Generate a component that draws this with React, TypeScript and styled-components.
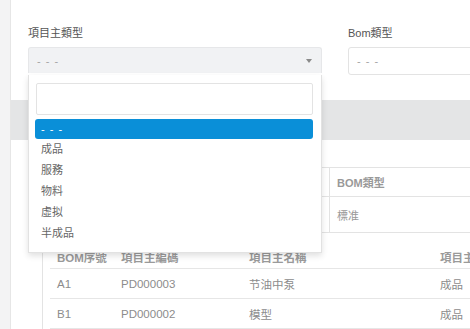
import styled, { createGlobalStyle } from 'styled-components';

const GlobalStyle = createGlobalStyle`
  html, body {
    margin: 0;
    padding: 0;
    background: #fff;
    font-family: "Liberation Sans", "Noto Sans CJK TC", sans-serif;
    font-size: 11px;
    color: #666;
    overflow: hidden;
  }
`;

const Page = styled.div`
  display: flex;
  width: 470px;
  height: 329px;
  overflow: hidden;
`;

const SideStrip = styled.div`
  width: 10px;
  flex: none;
  background: #f3f3f4;
  border-right: 1px solid #e6e6e6;
`;

const Main = styled.div`
  flex: 1;
  min-width: 0;
  display: flex;
  flex-direction: column;
  padding-top: 26px;
`;

const FormRow = styled.div`
  display: flex;
  gap: 26px;
  padding-left: 17px;
`;

const Field = styled.div<{ $width: number }>`
  position: relative;
  width: ${(p) => p.$width}px;
  flex: none;
  display: flex;
  flex-direction: column;
`;

const Label = styled.div`
  height: 14px;
  line-height: 14px;
  margin-bottom: 7px;
  color: #555;
  font-size: 11px;
`;

const SelectBox = styled.div<{ $open?: boolean }>`
  box-sizing: border-box;
  height: ${(p) => (p.$open ? 26 : 28)}px;
  display: flex;
  align-items: center;
  justify-content: space-between;
  padding: 0 9px 0 8px;
  border: 1px solid ${(p) => (p.$open ? '#e6e7e9' : '#e3e3e3')};
  border-bottom: ${(p) => (p.$open ? 'none' : '1px solid #e3e3e3')};
  border-radius: ${(p) => (p.$open ? '3px 3px 0 0' : '3px')};
  background: ${(p) => (p.$open ? '#f1f2f4' : '#fff')};
  color: #a5a5a5;
  letter-spacing: 1px;
`;

const Caret = styled.span`
  width: 0;
  height: 0;
  border-left: 3.5px solid transparent;
  border-right: 3.5px solid transparent;
  border-top: 4px solid #8a8a8a;
`;

const Dropdown = styled.div`
  position: absolute;
  left: 0;
  top: 100%;
  width: 294px;
  box-sizing: border-box;
  padding: 8px 8px 8px 6px;
  background: #fff;
  border: 1px solid #e2e2e2;
  border-top: none;
  box-shadow: 0 3px 6px rgba(0, 0, 0, 0.12);
  z-index: 5;
`;

const SearchInput = styled.div`
  box-sizing: border-box;
  height: 32px;
  margin: 0 0 4px 1px;
  border: 1px solid #e3e3e3;
  border-radius: 2px;
  background: #fff;
`;

const Option = styled.div<{ $active?: boolean }>`
  height: ${(p) => (p.$active ? 20 : 21)}px;
  line-height: ${(p) => (p.$active ? 20 : 21)}px;
  padding-left: 6px;
  border-radius: 3px;
  background: ${(p) => (p.$active ? '#0a8fd8' : 'transparent')};
  color: ${(p) => (p.$active ? '#fff' : '#666')};
  letter-spacing: ${(p) => (p.$active ? '1px' : '0')};
`;

const Band = styled.div`
  height: 42px;
  margin-top: 25px;
  background: #e4e5e6;
`;

const Table = styled.div`
  margin-top: 27px;
  margin-left: 17px;
  border-top: 1px solid #e3e3e3;
`;

const TableRow = styled.div<{ $h: number }>`
  display: grid;
  grid-template-columns: 301px 1fr;
  height: ${(p) => p.$h}px;
  border-bottom: 1px solid #e3e3e3;
`;

const TableCell = styled.div<{ $head?: boolean; $first?: boolean }>`
  display: flex;
  align-items: center;
  padding-left: 7px;
  border-left: ${(p) => (p.$first ? 'none' : '1px solid #e3e3e3')};
  color: #999;
  font-weight: ${(p) => (p.$head ? 'bold' : 'normal')};
`;

const Nested = styled.div`
  margin: 12px 0 0 31px;
  padding-left: 7px;
  border-left: 1px solid #e3e3e3;
`;

const NestedRow = styled.div<{ $h: number }>`
  display: grid;
  grid-template-columns: 64px 128px 191px 1fr;
  height: ${(p) => p.$h}px;
  border-bottom: 1px solid #e6e6e6;
`;

const NestedCell = styled.div<{ $head?: boolean }>`
  display: flex;
  align-items: center;
  padding-left: 7px;
  white-space: nowrap;
  color: ${(p) => (p.$head ? '#9a9a9a' : '#8c8c8c')};
  font-weight: ${(p) => (p.$head ? 'bold' : 'normal')};
  font-size: 11.5px;
`;

const options = ['成品', '服務', '物料', '虛拟', '半成品'];

const rows = [
  ['A1', 'PD000003', '节油中泵', '成品'],
  ['B1', 'PD000002', '模型', '成品'],
];

export default function App() {
  return (
    <>
      <GlobalStyle />
      <Page>
        <SideStrip />
        <Main>
          <FormRow>
            <Field $width={294}>
              <Label>項目主類型</Label>
              <SelectBox $open>
                <span>- - -</span>
                <Caret />
              </SelectBox>
              <Dropdown>
                <SearchInput />
                <Option $active>- - -</Option>
                {options.map((o) => (
                  <Option key={o}>{o}</Option>
                ))}
              </Dropdown>
            </Field>
            <Field $width={160}>
              <Label>Bom類型</Label>
              <SelectBox>
                <span>- - -</span>
              </SelectBox>
            </Field>
          </FormRow>
          <Band />
          <Table>
            <TableRow $h={28}>
              <TableCell $head $first />
              <TableCell $head>BOM類型</TableCell>
            </TableRow>
            <TableRow $h={35}>
              <TableCell $first />
              <TableCell>標准</TableCell>
            </TableRow>
          </Table>
          <Nested>
            <NestedRow $h={23}>
              <NestedCell $head>BOM序號</NestedCell>
              <NestedCell $head>項目主編碼</NestedCell>
              <NestedCell $head>項目主名稱</NestedCell>
              <NestedCell $head>項目主類型</NestedCell>
            </NestedRow>
            {rows.map((r) => (
              <NestedRow $h={29} key={r[0]}>
                {r.map((c, i) => (
                  <NestedCell key={i}>{c}</NestedCell>
                ))}
              </NestedRow>
            ))}
          </Nested>
        </Main>
      </Page>
    </>
  );
}
